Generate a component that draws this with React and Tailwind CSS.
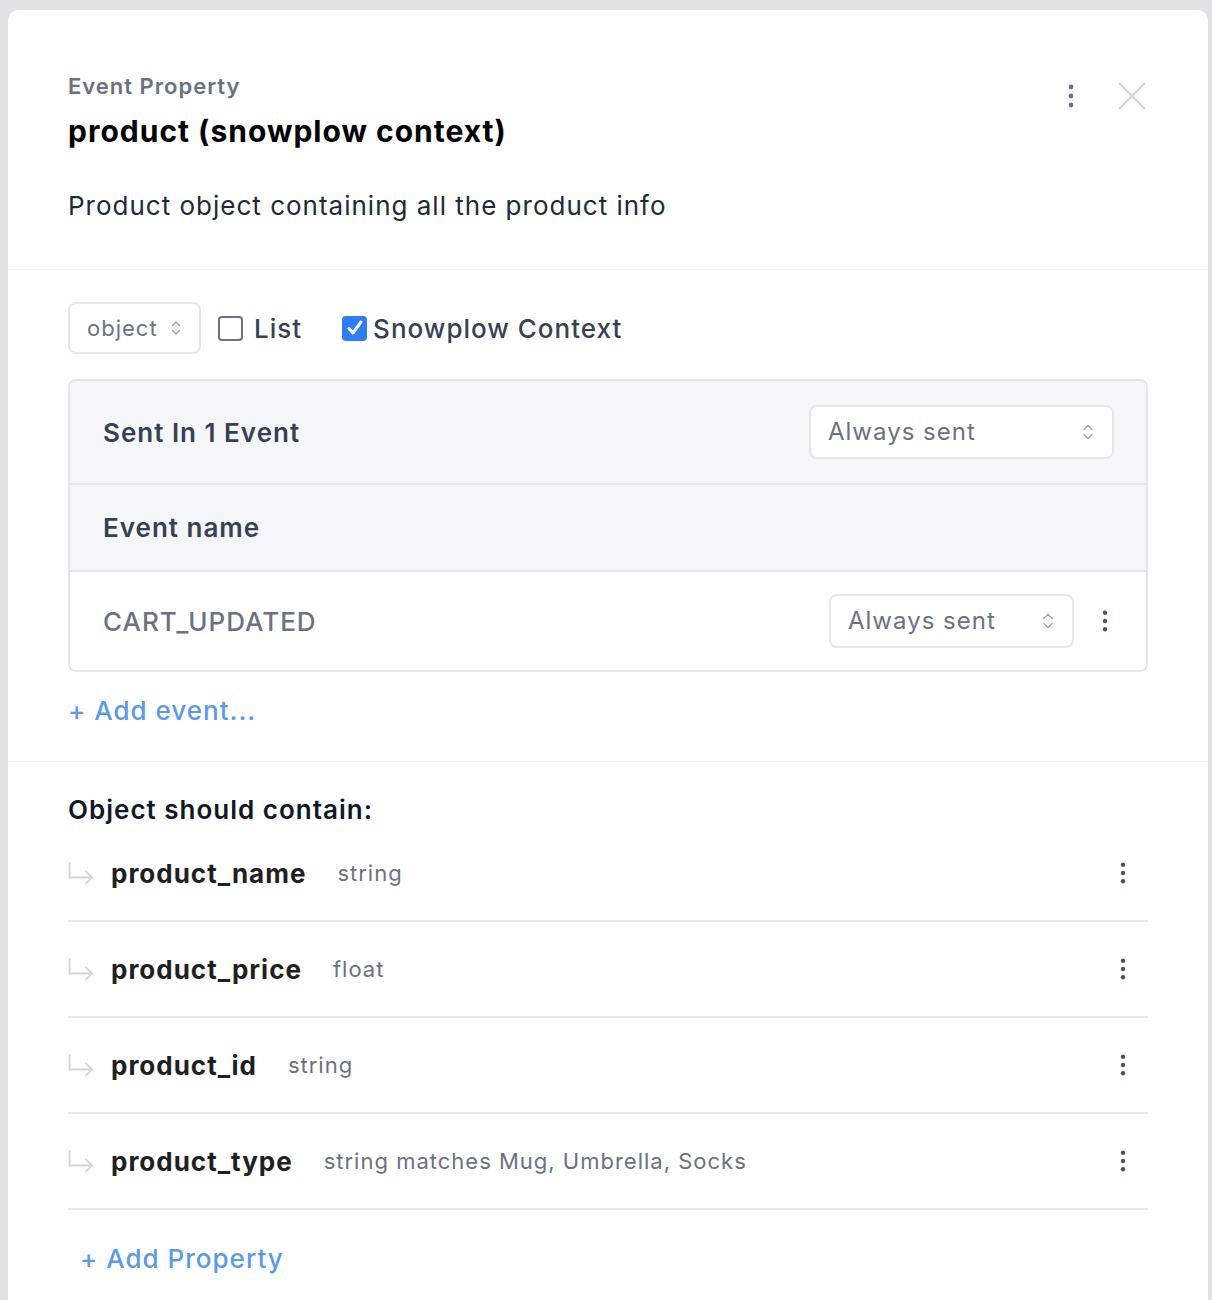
import { ChevronsUpDown } from 'lucide-react';

const font = { fontFamily: 'Inter, "Noto Sans", sans-serif' };

function Kebab({ className = '' }) {
  return (
    <svg viewBox="0 0 6 24" className={className} fill="currentColor" aria-hidden>
      <circle cx="3" cy="3" r="2.4" />
      <circle cx="3" cy="12" r="2.4" />
      <circle cx="3" cy="21" r="2.4" />
    </svg>
  );
}

function CloseIcon() {
  return (
    <svg viewBox="0 0 28 28" className="h-[28px] w-[28px] text-gray-300" stroke="currentColor" strokeWidth="2" aria-hidden>
      <path d="M1 1 27 27M27 1 1 27" />
    </svg>
  );
}

function ChildArrow() {
  return (
    <svg viewBox="0 0 26 22" className="h-[22px] w-[26px] shrink-0 text-gray-300" fill="none" stroke="currentColor" strokeWidth="1.8" strokeLinecap="round" strokeLinejoin="round" aria-hidden>
      <path d="M1.5 1v14.5H24M18 9.5l6 6-6 6" />
    </svg>
  );
}

function Select({ label, className = '' }) {
  return (
    <div className={`flex h-[54px] items-center justify-between rounded-lg border-2 border-gray-200 bg-white pl-[17px] pr-[14px] text-[24px] text-gray-500 ${className}`}>
      <span>{label}</span>
      <ChevronsUpDown className="h-[20px] w-[20px] text-gray-400" strokeWidth={1.6} />
    </div>
  );
}

const properties = [
  { name: 'product_name', type: 'string' },
  { name: 'product_price', type: 'float' },
  { name: 'product_id', type: 'string' },
  { name: 'product_type', type: 'string matches Mug, Umbrella, Socks' },
];

export default function App() {
  return (
    <div style={font} className="h-[1300px] overflow-hidden bg-[#e1e2e5] pl-[8px] pt-[10px] tracking-[1px]">
      <div className="h-[1300px] w-[1200px] overflow-hidden rounded-t-[10px] bg-white">
        <header className="flex items-start justify-between border-b border-gray-100 pb-[45px] pl-[60px] pr-[62px] pt-[62px]">
          <div>
            <p className="text-[22px] font-semibold leading-[28px] text-gray-500">Event Property</p>
            <h1 className="mt-[12px] text-[30px] font-bold leading-[38px] text-black">
              product (snowplow context)
            </h1>
            <p className="mt-[38px] text-[26px] leading-[36px] text-gray-800">
              Product object containing all the product info
            </p>
          </div>
          <div className="mt-[10px] flex items-center gap-[44px]">
            <Kebab className="h-[24px] w-[6px] text-gray-500" />
            <CloseIcon />
          </div>
        </header>

        <section className="border-b border-gray-100 px-[60px] pb-[32px] pt-[32px]">
          <div className="flex items-center">
            <div className="flex h-[52px] w-[133px] items-center justify-between rounded-lg border-2 border-gray-200 pl-[17px] pr-[14px] text-[22px] text-gray-500">
              <span>object</span>
              <ChevronsUpDown className="h-[18px] w-[18px] text-gray-400" strokeWidth={1.6} />
            </div>
            <label className="ml-[17px] flex items-center text-[26px] font-medium text-gray-700">
              <span className="h-[25px] w-[25px] rounded-[4px] border-2 border-gray-500 bg-white" />
              <span className="ml-[11px]">List</span>
            </label>
            <label className="ml-[40px] flex items-center text-[26px] font-medium text-gray-700">
              <span className="flex h-[25px] w-[25px] items-center justify-center rounded-[4px] bg-[#2f7cf6]">
                <svg viewBox="0 0 20 20" className="h-[20px] w-[20px]" fill="none" stroke="white" strokeWidth="3" strokeLinecap="round" strokeLinejoin="round">
                  <path d="M4 10.5l4 4.5 8-11" />
                </svg>
              </span>
              <span className="ml-[6px]">Snowplow Context</span>
            </label>
          </div>

          <div className="mt-[25px] overflow-hidden rounded-lg border-2 border-gray-200">
            <div className="flex h-[102px] items-center justify-between bg-[#f5f6fa] pl-[33px] pr-[32px]">
              <span className="text-[26px] font-semibold text-gray-700">Sent In 1 Event</span>
              <Select label="Always sent" className="w-[305px]" />
            </div>
            <div className="flex h-[87px] items-center border-t-2 border-gray-200 bg-[#f5f6fa] pl-[33px]">
              <span className="text-[26px] font-semibold text-gray-700">Event name</span>
            </div>
            <div className="flex h-[100px] items-center justify-between border-t-2 border-gray-200 bg-white pl-[33px] pr-[38px]">
              <span className="text-[26px] font-medium text-gray-500">CART_UPDATED</span>
              <div className="flex items-center gap-[28px]">
                <Select label="Always sent" className="w-[245px]" />
                <Kebab className="h-[22px] w-[6px] text-gray-600" />
              </div>
            </div>
          </div>

          <button type="button" className="mt-[21px] text-[26px] font-medium leading-[36px] text-[#5c9ae8]">
            + Add event...
          </button>
        </section>

        <section className="px-[60px] pt-[32px]">
          <h2 className="text-[26px] font-semibold leading-[32px] text-gray-900">Object should contain:</h2>
          <ul>
            {properties.map((p) => (
              <li key={p.name} className="flex h-[96px] items-center border-b-2 border-gray-200 pr-[22px]">
                <ChildArrow />
                <span className="ml-[17px] text-[26px] font-bold text-[#1f2023]">{p.name}</span>
                <span className="ml-[31px] text-[22px] text-gray-500">{p.type}</span>
                <Kebab className="ml-auto h-[22px] w-[6px] text-gray-600" />
              </li>
            ))}
          </ul>
          <div className="flex h-[96px] items-center pl-[12px]">
            <button type="button" className="text-[26px] font-medium text-[#5c9ae8]">
              + Add Property
            </button>
          </div>
        </section>
      </div>
    </div>
  );
}
